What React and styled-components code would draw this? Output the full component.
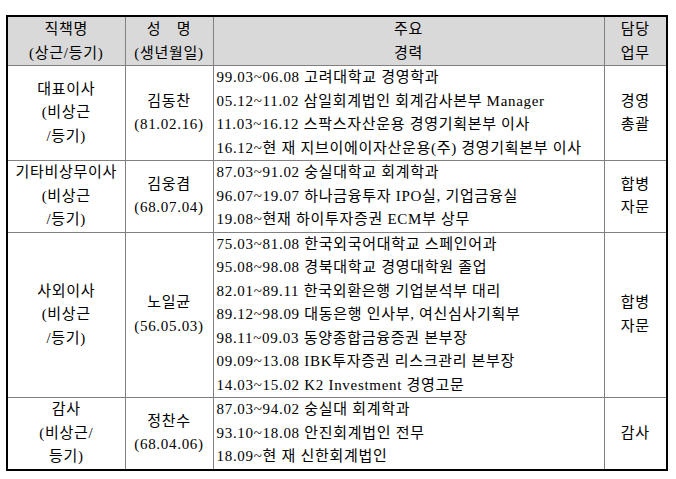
import React from 'react';
import styled, { createGlobalStyle } from 'styled-components';

const GlobalStyle = createGlobalStyle`
  body {
    margin: 0;
    background: #ffffff;
    font-family: "Liberation Serif", "Noto Sans CJK KR", serif;
    color: #000000;
  }
`;

const rows = [
  {
    title: ['대표이사', '(비상근', '/등기)'],
    name: ['김동찬', '(81.02.16)'],
    career: [
      '99.03~06.08 고려대학교 경영학과',
      '05.12~11.02 삼일회계법인 회계감사본부 Manager',
      '11.03~16.12 스팍스자산운용 경영기획본부 이사',
      '16.12~현 재 지브이에이자산운용(주) 경영기획본부 이사',
    ],
    duty: ['경영', '총괄'],
  },
  {
    title: ['기타비상무이사', '(비상근', '/등기)'],
    name: ['김웅겸', '(68.07.04)'],
    career: [
      '87.03~91.02 숭실대학교 회계학과',
      '96.07~19.07 하나금융투자 IPO실, 기업금융실',
      '19.08~현재 하이투자증권 ECM부 상무',
    ],
    duty: ['합병', '자문'],
  },
  {
    title: ['사외이사', '(비상근', '/등기)'],
    name: ['노일균', '(56.05.03)'],
    career: [
      '75.03~81.08 한국외국어대학교 스페인어과',
      '95.08~98.08 경북대학교 경영대학원 졸업',
      '82.01~89.11 한국외환은행 기업분석부 대리',
      '89.12~98.09 대동은행 인사부, 여신심사기획부',
      '98.11~09.03 동양종합금융증권 본부장',
      '09.09~13.08 IBK투자증권 리스크관리 본부장',
      '14.03~15.02 K2 Investment 경영고문',
    ],
    duty: ['합병', '자문'],
  },
  {
    title: ['감사', '(비상근/', '등기)'],
    name: ['정찬수', '(68.04.06)'],
    career: [
      '87.03~94.02 숭실대 회계학과',
      '93.10~18.08 안진회계법인 전무',
      '18.09~현 재 신한회계법인',
    ],
    duty: ['감사'],
  },
];

const Lines = ({ items }) => items.map((t, i) => <Line key={i}>{t}</Line>);

const App = () => (
  <Page>
    <GlobalStyle />
    <Table>
      <colgroup>
        <col style={{ width: 118 }} />
        <col style={{ width: 88 }} />
        <col style={{ width: 391 }} />
        <col style={{ width: 63 }} />
      </colgroup>
      <thead>
        <tr>
          <HeadCell><Lines items={['직책명', '(상근/등기)']} /></HeadCell>
          <HeadCell><Lines items={['성\u3000명', '(생년월일)']} /></HeadCell>
          <HeadCell><Lines items={['주요', '경력']} /></HeadCell>
          <HeadCell><Lines items={['담당', '업무']} /></HeadCell>
        </tr>
      </thead>
      <tbody>
        {rows.map((r, i) => (
          <tr key={i}>
            <Cell><Lines items={r.title} /></Cell>
            <Cell><Lines items={r.name} /></Cell>
            <Cell $align="left"><Lines items={r.career} /></Cell>
            <Cell><Lines items={r.duty} /></Cell>
          </tr>
        ))}
      </tbody>
    </Table>
  </Page>
);

const Page = styled.div`
  padding: 15px 6px;
`;

const Table = styled.table`
  border-collapse: collapse;
  table-layout: fixed;
  width: 660px;
  border: 2px solid #000000;
  font-size: 15px;
  letter-spacing: 0.7px;
`;

const HeadCell = styled.th`
  background: #d9d9d9;
  border: 1px solid #808080;
  font-weight: normal;
  line-height: 24px;
  padding: 0 1px;
  text-align: center;
  vertical-align: middle;
`;

const Cell = styled.td`
  border: 1px solid #808080;
  line-height: 23.5px;
  padding: 0 ${(p) => (p.$align === 'left' ? '3px' : '1px')};
  text-align: ${(p) => p.$align || 'center'};
  vertical-align: middle;
`;

const Line = styled.div`
  white-space: nowrap;
`;

export default App;
